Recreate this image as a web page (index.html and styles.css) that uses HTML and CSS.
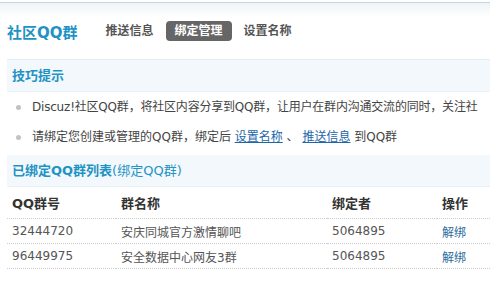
FILE: index.html
```html
<!DOCTYPE html>
<html lang="zh-CN">
<head>
    <meta charset="UTF-8">
    <title>社区QQ群</title>
    <link rel="stylesheet" href="styles.css">
</head>
<body>
    <div class="topbar">
        <div class="head">
            <h1>社区QQ群</h1>
            <ul class="nav">
                <li><a href="#">推送信息</a></li>
                <li class="current"><a href="#">绑定管理</a></li>
                <li><a href="#">设置名称</a></li>
            </ul>
        </div>
    </div>

    <div class="main">
        <h2 class="bar">技巧提示</h2>
        <ul class="tips">
            <li class="long">Discuz!社区QQ群，将社区内容分享到QQ群，让用户在群内沟通交流的同时，关注社</li>
            <li>请绑定您创建或管理的QQ群，绑定后 <a href="#">设置名称</a> 、 <a href="#">推送信息</a> 到QQ群</li>
        </ul>

        <h2 class="bar">已绑定QQ群列表<span class="sub">(绑定QQ群)</span></h2>
        <table class="list">
            <tr class="th">
                <td class="c1">QQ群号</td>
                <td class="c2">群名称</td>
                <td class="c3">绑定者</td>
                <td>操作</td>
            </tr>
            <tr>
                <td>32444720</td>
                <td>安庆同城官方激情聊吧</td>
                <td>5064895</td>
                <td><a href="#" class="act">解绑</a></td>
            </tr>
            <tr>
                <td>96449975</td>
                <td>安全数据中心网友3群</td>
                <td>5064895</td>
                <td><a href="#" class="act">解绑</a></td>
            </tr>
        </table>
    </div>
</body>
</html>
```

FILE: styles.css
```css
body {
    margin: 0;
    padding-top: 2px;
    font: 12px "DejaVu Sans", "Noto Sans CJK SC", sans-serif;
    color: #444;
    background: #fff;
    overflow: hidden;
}
a {
    color: #2366a8;
}

.topbar {
    border-top: 1px solid #c3d8df;
    background: linear-gradient(#edf4f8, #fff 14px);
}
.head {
    display: flex;
    align-items: center;
    height: 56px;
    margin-left: 7px;
    border-bottom: 1px solid #e6eff3;
}
.head h1 {
    margin: 0 19px 0 0;
    font-size: 15px;
    color: #1f93c4;
}
.nav {
    display: flex;
    gap: 3px;
    margin: 0;
    padding: 0;
    list-style: none;
}
.nav a {
    display: block;
    padding: 0 9px;
    line-height: 20px;
    font-weight: bold;
    font-size: 12px;
    color: #555;
    text-decoration: none;
    border-radius: 4px;
}
.nav .current a {
    background: #666;
    color: #fff;
}

.main {
    margin-left: 7px;
}
.bar {
    margin: 0;
    padding-left: 5px;
    height: 31px;
    line-height: 31px;
    font-size: 13px;
    color: #1f93c4;
    background: #f2f8fc;
    border-bottom: 1px solid #e9f2f7;
}
.bar .sub {
    font-weight: normal;
}

.tips {
    margin: 0;
    padding: 0 0 3px 0;
    list-style: none;
    white-space: nowrap;
}
.tips li {
    line-height: 30px;
    padding-left: 25px;
    position: relative;
}
.tips .long {
    letter-spacing: -0.2px;
}
.tips li::before {
    content: "";
    position: absolute;
    left: 9px;
    top: 13px;
    width: 5px;
    height: 5px;
    border-radius: 50%;
    background: #c2c2c2;
}

.list {
    width: 100%;
    border-collapse: collapse;
}
.list td {
    padding: 0 0 0 5px;
    height: 24px;
    color: #555;
    border-bottom: 1px dotted #ccc;
}
.list .th td {
    height: 31px;
    font-size: 13px;
    font-weight: bold;
    color: #333;
}
.list .c1 {
    width: 104px;
}
.list .c2 {
    width: 206px;
}
.list .c3 {
    width: 105px;
}
.list .act {
    color: #2b6c9e;
    text-decoration: none;
}
```
